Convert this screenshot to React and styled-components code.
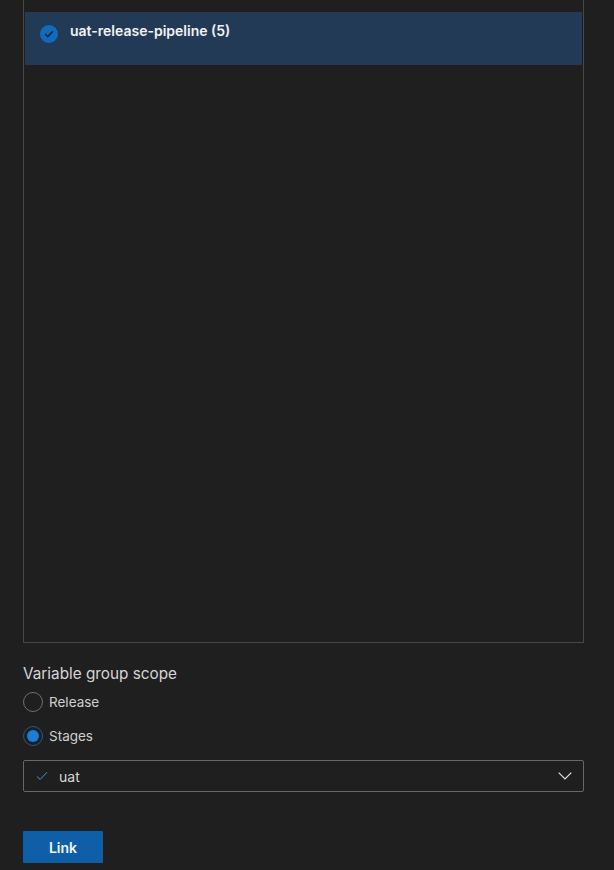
import React, { useState } from 'react'
import styled, { createGlobalStyle } from 'styled-components'

const GlobalStyle = createGlobalStyle`
  html, body {
    margin: 0;
    padding: 0;
    background: #1f1f1f;
  }
  body {
    font-family: Inter, "Noto Sans", "Liberation Sans", sans-serif;
    color: #d4d4d4;
  }
`

const Page = styled.div`
  width: 561px;
  padding: 0 30px 0 23px;
  height: 870px;
  display: flex;
  flex-direction: column;
`

const ListBox = styled.div`
  height: 643px;
  box-sizing: border-box;
  border: 1px solid #474747;
  border-top: none;
  padding: 12px 1px 0;
`

const PipelineRow = styled.div`
  height: 53px;
  background: #233a57;
  display: flex;
  align-items: flex-start;
  padding: 9px 0 0 15px;
  box-sizing: border-box;
  gap: 12px;
`

const CheckCircle = styled.div`
  width: 18px;
  height: 18px;
  margin-top: 4px;
  border-radius: 50%;
  background: #0f6cbd;
  display: flex;
  align-items: center;
  justify-content: center;
`

const PipelineName = styled.div`
  font-size: 14px;
  font-weight: 600;
  color: #f2f2f2;
  line-height: 20px;
`

const Heading = styled.div`
  margin-top: 21px;
  font-size: 15.3px;
  line-height: 20px;
  color: #d6d6d6;
`

const RadioRow = styled.label`
  display: flex;
  align-items: center;
  gap: 6px;
  height: 20px;
  margin-top: ${p => p.$first ? '8px' : '14px'};
  cursor: pointer;
  font-size: 13.5px;
  color: #cfcfcf;
`

const RadioCircle = styled.span`
  width: 20px;
  height: 20px;
  box-sizing: border-box;
  border-radius: 50%;
  border: 1px solid ${p => p.$checked ? '#1d5a94' : '#6f6f6f'};
  display: flex;
  align-items: center;
  justify-content: center;
  &::after {
    content: '';
    width: 12px;
    height: 12px;
    border-radius: 50%;
    background: #1a7ed6;
    display: ${p => p.$checked ? 'block' : 'none'};
  }
`

const Select = styled.div`
  margin-top: 14px;
  height: 32px;
  box-sizing: border-box;
  border: 1px solid #676767;
  border-radius: 2px;
  display: flex;
  align-items: center;
  padding: 0 11px 0 12px;
  font-size: 14px;
  color: #d8d8d8;
`

const SelectValue = styled.span`
  flex: 1;
  margin-left: 11px;
`

const LinkButton = styled.button`
  margin-top: 39px;
  width: 80px;
  height: 32px;
  border: none;
  border-radius: 1px;
  background: #0e5fa7;
  color: #f4f4f4;
  font-family: inherit;
  font-size: 14px;
  font-weight: 600;
  cursor: pointer;
`

export default function App() {
  const [scope, setScope] = useState('stages')

  return (
    <>
      <GlobalStyle />
      <Page>
        <ListBox>
          <PipelineRow>
            <CheckCircle>
              <svg width="10" height="8" viewBox="0 0 10 8">
                <path d="M1.2 4.2 L3.8 6.6 L8.8 1.4" fill="none" stroke="#102338" strokeWidth="1.6" />
              </svg>
            </CheckCircle>
            <PipelineName>uat-release-pipeline (5)</PipelineName>
          </PipelineRow>
        </ListBox>

        <Heading>Variable group scope</Heading>
        <RadioRow $first onClick={() => setScope('release')}>
          <RadioCircle $checked={scope === 'release'} />
          Release
        </RadioRow>
        <RadioRow onClick={() => setScope('stages')}>
          <RadioCircle $checked={scope === 'stages'} />
          Stages
        </RadioRow>

        <Select>
          <svg width="12" height="10" viewBox="0 0 12 10">
            <path d="M1 5.5 L4.2 8.4 L11 1.2" fill="none" stroke="#4a8fd0" strokeWidth="1" />
          </svg>
          <SelectValue>uat</SelectValue>
          <svg width="14" height="8" viewBox="0 0 14 8">
            <path d="M0.7 0.7 L7 7 L13.3 0.7" fill="none" stroke="#e0e0e0" strokeWidth="1.2" />
          </svg>
        </Select>

        <div>
          <LinkButton>Link</LinkButton>
        </div>
      </Page>
    </>
  )
}
